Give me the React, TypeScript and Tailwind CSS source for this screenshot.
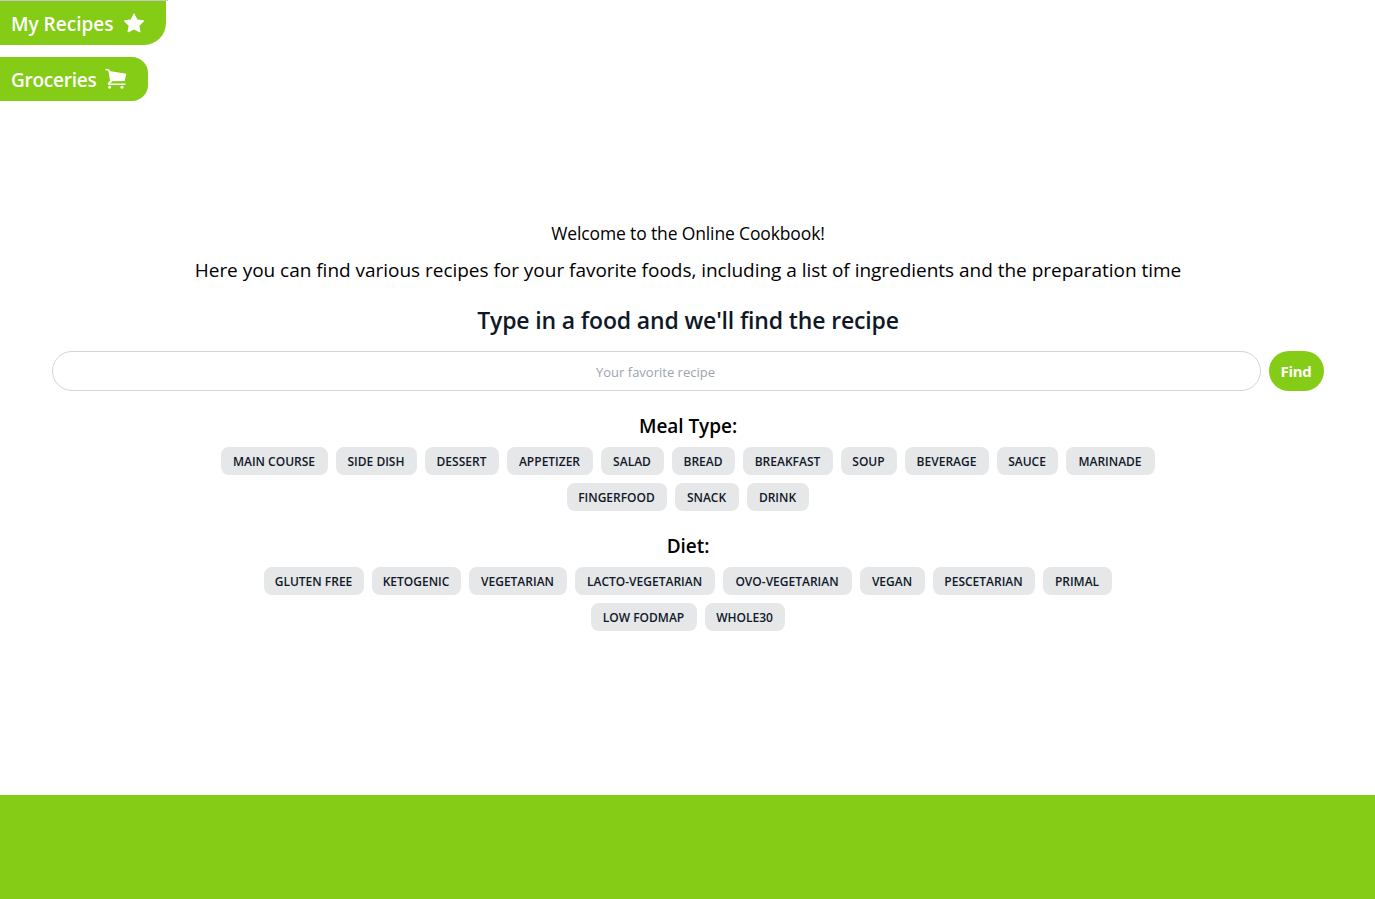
import { BsStarFill } from "react-icons/bs";

type Tag = [label: string, width: string];

const mealTypes: Tag[][] = [
  [
    ["MAIN COURSE", "w-[107px]"],
    ["SIDE DISH", "w-[81px]"],
    ["DESSERT", "w-[74px]"],
    ["APPETIZER", "w-[86px]"],
    ["SALAD", "w-[63px]"],
    ["BREAD", "w-[63px]"],
    ["BREAKFAST", "w-[90px]"],
    ["SOUP", "w-[56px]"],
    ["BEVERAGE", "w-[84px]"],
    ["SAUCE", "w-[61px]"],
    ["MARINADE", "w-[89px]"],
  ],
  [
    ["FINGERFOOD", "w-[100px]"],
    ["SNACK", "w-[64px]"],
    ["DRINK", "w-[62px]"],
  ],
];

const diets: Tag[][] = [
  [
    ["GLUTEN FREE", "w-[100px]"],
    ["KETOGENIC", "w-[89px]"],
    ["VEGETARIAN", "w-[98px]"],
    ["LACTO-VEGETARIAN", "w-[140px]"],
    ["OVO-VEGETARIAN", "w-[129px]"],
    ["VEGAN", "w-[65px]"],
    ["PESCETARIAN", "w-[102px]"],
    ["PRIMAL", "w-[69px]"],
  ],
  [
    ["LOW FODMAP", "w-[106px]"],
    ["WHOLE30", "w-[80px]"],
  ],
];

function CartIcon() {
  return (
    <svg width="22" height="22" viewBox="0 0 22 22" fill="none" stroke="white">
      <path d="M1 1.4 4 2.2 6 14.2" strokeWidth="1.4" strokeLinecap="round" strokeLinejoin="round" />
      <path d="M4.2 3 21.3 5.7 19.7 12.9 6 13.3Z" fill="white" stroke="none" />
      <path d="M5.6 13.3 3.6 15.3Q3 16.2 4.4 16.2H20" strokeWidth="1.4" strokeLinecap="round" />
      <circle cx="4.6" cy="19.3" r="1.45" fill="white" stroke="none" />
      <circle cx="17" cy="19.3" r="1.45" fill="white" stroke="none" />
    </svg>
  );
}

function TagGroup({ title, rows }: { title: string; rows: Tag[][] }) {
  return (
    <section className="flex flex-col items-center">
      <h3 className="h-7 pl-px text-[19px] leading-7 font-[550] tracking-[-0.05px] text-black">{title}</h3>
      <div className="mt-[7px] flex flex-col gap-2">
        {rows.map((row, i) => (
          <div key={i} className="flex justify-center gap-2">
            {row.map(([label, width]) => (
              <button
                key={label}
                className={`${width} h-7 rounded-lg bg-[#e5e7e9] pt-px text-center text-xs leading-7 font-semibold whitespace-nowrap text-gray-900`}
              >
                {label}
              </button>
            ))}
          </div>
        ))}
      </div>
    </section>
  );
}

export default function App() {
  return (
    <div className="flex h-[899px] w-full flex-col overflow-hidden bg-white font-['Open_Sans','Noto_Sans',sans-serif]">
      <div className="h-px w-[168px] shrink-0 bg-[#c6c6c6]" />
      <nav className="flex flex-col items-start gap-3 text-[19px] leading-7 font-semibold text-white">
        <button className="flex h-11 w-[166px] items-center rounded-br-[22px] bg-[#84cc16] pl-[11px]">
          <span className="w-[113px] pt-0.5 text-left whitespace-nowrap">My Recipes</span>
          <BsStarFill size={20} />
        </button>
        <button className="flex h-11 w-[148px] items-center rounded-r-2xl bg-[#84cc16] pl-[11px]">
          <span className="w-[94px] pt-0.5 text-left tracking-[-0.25px] whitespace-nowrap">Groceries</span>
          <CartIcon />
        </button>
      </nav>
      <main className="mt-[118px] flex flex-col items-center">
        <p className="h-7 pl-px text-[17.5px] leading-7 font-normal tracking-[-0.14px] text-black">
          Welcome to the Online Cookbook!
        </p>
        <p className="mt-[9px] h-7 pl-px text-[19px] leading-7 font-normal tracking-[-0.025px] whitespace-nowrap text-black">
          Here you can find various recipes for your favorite foods, including a list of ingredients and the preparation time
        </p>
        <h2 className="mt-5 h-8 pl-px text-[23px] leading-8 font-[550] tracking-[-0.15px] text-gray-900">
          Type in a food and we'll find the recipe
        </h2>
        <div className="mt-[15px] flex gap-2">
          <input
            className="h-10 w-[1209px] rounded-[20px] border border-[#d1d5db] pt-0.5 pr-px text-center text-[13px] placeholder:text-[#9ca3af]"
            placeholder="Your favorite recipe"
          />
          <button className="h-10 w-[55px] rounded-[20px] bg-[#84cc16] text-center text-[15px] font-bold tracking-[-0.3px] text-white">
            Find
          </button>
        </div>
        <div className="mt-[21px] flex flex-col gap-[21px]">
          <TagGroup title="Meal Type:" rows={mealTypes} />
          <TagGroup title="Diet:" rows={diets} />
        </div>
      </main>
      <footer className="mt-auto h-[104px] shrink-0 bg-[#84cc16]" />
    </div>
  );
}
